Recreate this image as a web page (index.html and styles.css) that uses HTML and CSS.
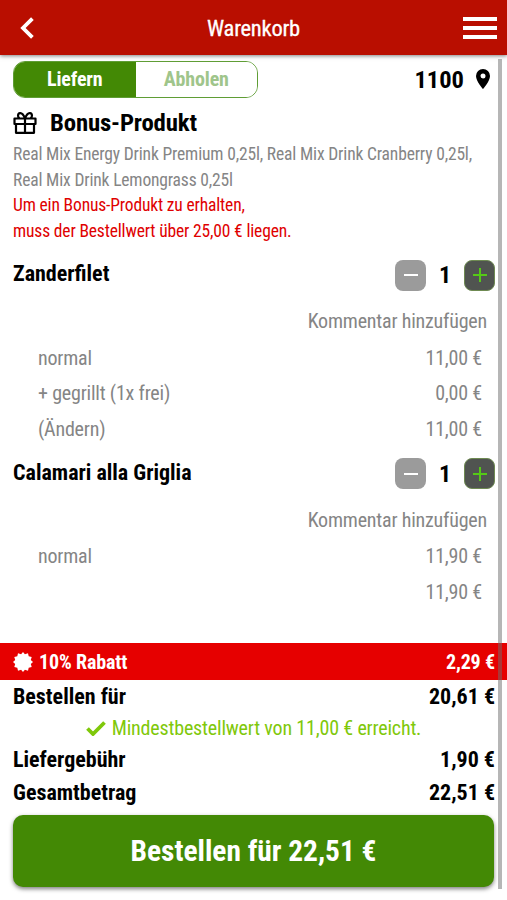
FILE: index.html
```html
<!DOCTYPE html>
<html lang="de">
<head>
  <meta charset="UTF-8" />
  <meta name="viewport" content="width=device-width, initial-scale=1.0"/>
  <title>Warenkorb</title>
  <link rel="stylesheet" href="styles.css">
</head>
<body>
  <header class="topbar">
    <svg class="back" viewBox="0 0 14 22"><path d="M12.400 1.700 3 11l9.400 9.300" fill="none" stroke="#fff" stroke-width="3.800"/></svg>
    <h1>Warenkorb</h1>
    <div class="menu"><span></span><span></span><span></span></div>
  </header>

  <main>
    <div class="delivery">
      <div class="toggle">
        <button class="active">Liefern</button>
        <button>Abholen</button>
      </div>
      <div class="zip">
        <span>1100</span>
        <svg viewBox="0 0 14 20"><path fill="#000" fill-rule="evenodd" d="M7 0a7 7 0 0 0-7 7c0 5.200 7 13 7 13s7-7.800 7-13a7 7 0 0 0-7-7zm0 4.500a2.500 2.500 0 1 1 0 5 2.500 2.500 0 0 1 0-5z"/></svg>
      </div>
    </div>

    <section class="bonus">
      <h2>
        <svg viewBox="0 0 24 22" fill="none" stroke="#000" stroke-width="2.200" stroke-linejoin="round"><path d="M1.500 6.500h21v5.500h-21zM3 12h18v8.800H3zM12 6.500V21M12 6.500C10.500 2.500 8.500 1 7 1.200 4.500 1.500 4.500 5 6.500 6.500M12 6.500c1.500-4 3.500-5.500 5-5.300 2.500.3 2.500 3.800.5 5.300"/></svg>
        <span>Bonus-Produkt</span>
      </h2>
      <p>Real Mix Energy Drink Premium 0,25l, Real Mix Drink Cranberry 0,25l,<br>Real Mix Drink Lemongrass 0,25l</p>
      <p class="warning">Um ein Bonus-Produkt zu erhalten,<br>muss der Bestellwert über 25,00 € liegen.</p>
    </section>

    <section class="item">
      <div class="item-head">
        <h3>Zanderfilet</h3>
        <div class="stepper">
          <button class="minus"><svg viewBox="0 0 14 14"><path d="M0 7h14"/></svg></button>
          <span>1</span>
          <button class="plus"><svg viewBox="0 0 14 14"><path d="M0 7h14M7 0v14"/></svg></button>
        </div>
      </div>
      <div class="comment">Kommentar hinzufügen</div>
      <div class="line"><span>normal</span><span>11,00 €</span></div>
      <div class="line"><span>+ gegrillt (1x frei)</span><span>0,00 €</span></div>
      <div class="line"><span>(Ändern)</span><span>11,00 €</span></div>
    </section>

    <section class="item">
      <div class="item-head">
        <h3>Calamari alla Griglia</h3>
        <div class="stepper">
          <button class="minus"><svg viewBox="0 0 14 14"><path d="M0 7h14"/></svg></button>
          <span>1</span>
          <button class="plus"><svg viewBox="0 0 14 14"><path d="M0 7h14M7 0v14"/></svg></button>
        </div>
      </div>
      <div class="comment">Kommentar hinzufügen</div>
      <div class="line"><span>normal</span><span>11,90 €</span></div>
      <div class="line"><span></span><span>11,90 €</span></div>
    </section>
  </main>

  <footer>
    <div class="discount">
      <svg viewBox="-10 -10 20 20"><path fill="#fff" d="M0-10 1.900-7.800 5-8.700 5.700-5.700 8.700-5 7.800-1.900 10 0 7.800 1.900 8.700 5 5.700 5.700 5 8.700 1.900 7.800 0 10-1.900 7.800-5 8.700-5.700 5.700-8.700 5-7.800 1.900-10 0-7.800-1.900-8.700-5-5.700-5.700-5-8.700-1.900-7.800z"/></svg>
      <span>10% Rabatt</span>
      <span class="amount">2,29 €</span>
    </div>
    <div class="sum"><span>Bestellen für</span><span>20,61 €</span></div>
    <div class="minimum">
      <svg viewBox="0 0 20 15"><path d="M1.500 7.500 7 13 18.500 1.500" fill="none" stroke="#7fc80a" stroke-width="3.800"/></svg>
      <span>Mindestbestellwert von 11,00 € erreicht.</span>
    </div>
    <div class="sum fee"><span>Liefergebühr</span><span>1,90 €</span></div>
    <div class="sum"><span>Gesamtbetrag</span><span>22,51 €</span></div>
    <button class="order">Bestellen für 22,51 €</button>
  </footer>
  <div class="scrollbar"></div>
</body>
</html>
```

FILE: styles.css
```css
* {
  box-sizing: border-box;
}

body {
  margin: 0;
  height: 900px;
  position: relative;
  display: flex;
  flex-direction: column;
  overflow: hidden;
  background: #fff;
  color: #000;
  font-family: "Roboto Condensed", Roboto, sans-serif;
  font-stretch: 75%;
  font-size: 20px;
}

h1, h2, h3, p {
  margin: 0;
}

button {
  border: none;
  padding: 0;
  font: inherit;
  cursor: pointer;
}

svg {
  display: block;
}

.topbar {
  height: 55px;
  flex: none;
  display: flex;
  align-items: center;
  justify-content: space-between;
  padding: 0 10px 0 20px;
  background: #b90e00;
  color: #fff;
  box-shadow: 0 1px 4px rgba(0, 0, 0, 0.5);
}

.topbar h1 {
  font-size: 22.5px;
  font-weight: 400;
  letter-spacing: -0.25px;
  margin-left: 10px;
  -webkit-text-stroke: 0.3px #fff;
}

.back {
  width: 14px;
  height: 22px;
}

.menu {
  width: 34px;
  display: grid;
  gap: 5px;
}

.menu span {
  height: 4px;
  background: #fff;
}

main {
  flex: 1;
}

.delivery {
  display: flex;
  justify-content: space-between;
  align-items: center;
  padding: 6px 17px 0 13px;
}

.toggle {
  width: 245px;
  height: 37px;
  display: flex;
  border: 1px solid #5f9d35;
  border-radius: 12px;
  overflow: hidden;
}

.toggle button {
  flex: 1;
  padding-bottom: 2px;
  background: #fff;
  color: #9fc58b;
  font-size: 20px;
  font-weight: 700;
  letter-spacing: -0.15px;
}

.toggle .active {
  background: #438905;
  color: #fff;
}

.zip {
  display: flex;
  align-items: center;
  gap: 12px;
  font-size: 24.5px;
  font-weight: 700;
}

.zip svg {
  width: 14px;
  height: 20px;
  margin-bottom: 2px;
}

.bonus {
  padding: 7px 13px 0;
  font-size: 17.5px;
  line-height: 25.6px;
  letter-spacing: -0.16px;
  color: #858585;
}

.bonus h2 {
  display: flex;
  align-items: center;
  gap: 13px;
  height: 36px;
  margin-bottom: 1px;
  font-size: 24.8px;
  color: #000;
}

.bonus h2 svg {
  width: 24px;
  height: 22px;
}

.bonus p {
  white-space: nowrap;
}

.bonus .warning {
  color: #e00000;
}

.item {
  padding: 0 12px 8.5px 13px;
}

.bonus + .item {
  padding-top: 13px;
}

.item-head {
  display: flex;
  justify-content: space-between;
  align-items: center;
  height: 36px;
}

.item h3 {
  font-size: 22px;
  margin-bottom: 3px;
}

.stepper {
  display: flex;
  align-items: center;
  font-size: 24px;
  font-weight: 700;
}

.stepper span {
  width: 38px;
  text-align: center;
}

.stepper button {
  width: 31px;
  height: 31px;
  display: flex;
  align-items: center;
  justify-content: center;
  border-radius: 8px;
}

.stepper svg {
  width: 14px;
  height: 14px;
  fill: none;
  stroke-width: 2;
}

.minus {
  background: #9b9b9b;
  stroke: #fff;
}

.plus {
  background: #505450;
  border: 1px solid #6e8a52;
  stroke: #55c916;
}

.comment {
  height: 47.5px;
  padding: 10px 8px 0 0;
  line-height: 36px;
  text-align: right;
  letter-spacing: -0.2px;
  color: #858585;
}

.line {
  display: flex;
  justify-content: space-between;
  padding: 0 13px 0 25px;
  line-height: 35.5px;
  letter-spacing: -0.2px;
  color: #858585;
}

footer {
  height: 257px;
  flex: none;
}

.discount {
  display: flex;
  align-items: center;
  gap: 6px;
  height: 37px;
  padding: 0 12px 0 13px;
  background: #e60000;
  color: #fff;
  font-weight: 700;
  letter-spacing: -0.15px;
}

.discount svg {
  width: 20px;
  height: 20px;
}

.discount .amount {
  margin-left: auto;
}

.sum {
  display: flex;
  justify-content: space-between;
  padding: 0 12px 0 13px;
  font-size: 22px;
  font-weight: 700;
  line-height: 33px;
}

.minimum {
  display: flex;
  align-items: center;
  justify-content: center;
  gap: 6px;
  height: 30px;
  letter-spacing: -0.18px;
  color: #7fc80a;
}

.minimum svg {
  width: 20px;
  height: 15px;
}

.order {
  display: block;
  width: 481px;
  height: 72px;
  margin: 6px 13px 0;
  border-radius: 10px;
  background: #438905;
  color: #fff;
  font-size: 29.4px;
  font-weight: 700;
  box-shadow: 0 2px 4px rgba(0, 0, 0, 0.5);
}

/* thin scroll indicator over the page */
.scrollbar {
  position: absolute;
  top: 59px;
  left: 498px;
  width: 4px;
  height: 830px;
  background: rgba(110, 110, 110, 0.5);
}
```
